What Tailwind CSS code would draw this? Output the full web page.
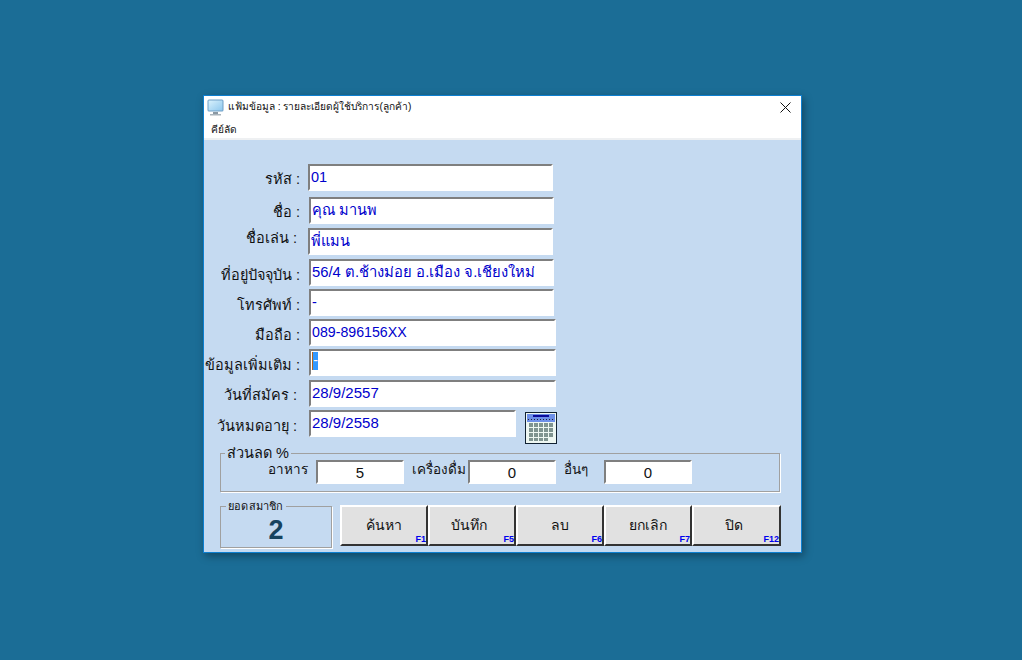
<!DOCTYPE html>
<html lang="th">
  <head>
    <meta charset="UTF-8" />
    <title>แฟ้มข้อมูล</title>
    <script src="https://cdn.jsdelivr.net/npm/@tailwindcss/browser@4"></script>
  </head>
  <body class="h-[660px] overflow-hidden bg-[#1b6d96] font-['Liberation_Sans','Noto_Sans',sans-serif] text-[#111]">
    <div class="pl-[203px] pt-[95px]">
      <div class="h-[458px] w-[599px] border border-[#0d7fd0] bg-[#c5daf1] shadow-[2px_3px_8px_rgba(0,0,0,0.35)]">
        <!-- title bar -->
        <div class="flex h-[22px] items-center bg-white pl-[3px]">
          <svg width="17" height="17" viewBox="0 0 17 17">
            <defs>
              <linearGradient id="screen" x1="0" y1="0" x2="1" y2="1">
                <stop offset="0" stop-color="#d8f1fc" />
                <stop offset="1" stop-color="#8fc8ee" />
              </linearGradient>
            </defs>
            <rect x="0.5" y="0.5" width="16" height="12" rx="1.5" fill="#6f9fc6" />
            <rect x="1.5" y="1.5" width="14" height="10" fill="url(#screen)" />
            <rect x="6" y="13" width="5" height="2" fill="#8a98a3" />
            <rect x="3" y="15" width="11" height="1.5" fill="#a9b4bc" />
          </svg>
          <span class="ml-1 text-[10.2px] leading-none">แฟ้มข้อมูล : รายละเอียดผู้ใช้บริการ(ลูกค้า)</span>
          <svg class="ml-auto mr-[10px]" width="11" height="11" viewBox="0 0 11 11">
            <path d="M0.5 0.5L10.5 10.5M10.5 0.5L0.5 10.5" stroke="#111" fill="none" />
          </svg>
        </div>
        <!-- menu -->
        <div class="h-[22px] border-b-2 border-[#eef0f2] bg-white pl-[7px] pt-1 text-[10.2px] leading-[16px]">คีย์ลัด</div>

        <!-- form rows -->
        <div class="pt-[24px] text-[14.5px]">
          <div class="flex h-[27px] items-center">
            <span class="mt-[5px] w-[96px] text-right">รหัส :</span>
            <div class="ml-[8px] h-[27px] w-[245px] border-2 border-[#7f7f7f] border-r-white border-b-white bg-white pl-[1px] text-[14.5px] leading-[22px] text-[#0000cc]">01</div>
          </div>
          <div class="mt-[6px] flex h-[27px] items-center">
            <span class="mt-[5px] w-[96px] text-right">ชื่อ :</span>
            <div class="ml-[9px] h-[27px] w-[245px] border-2 border-[#7f7f7f] border-r-white border-b-white bg-white pl-[1px] text-[14.5px] leading-[22px] text-[#0000cc]">คุณ มานพ</div>
          </div>
          <div class="mt-[4px] flex h-[27px] items-center">
            <span class="mb-[5px] w-[93px] text-right">ชื่อเล่น :</span>
            <div class="ml-[11px] h-[27px] w-[245px] border-2 border-[#7f7f7f] border-r-white border-b-white bg-white pl-[1px] text-[14.5px] leading-[22px] text-[#0000cc]">พี่แมน</div>
          </div>
          <div class="mt-[4px] flex h-[27px] items-center">
            <span class="mt-[7px] w-[96px] text-right whitespace-nowrap">ที่อยู่ปัจจุบัน :</span>
            <div class="ml-[9px] h-[27px] w-[245px] border-2 border-[#7f7f7f] border-r-white border-b-white bg-white pl-[1px] text-[14.8px] leading-[22px] whitespace-nowrap text-[#0000cc]">56/4 ต.ช้างม่อย อ.เมือง จ.เชียงใหม่</div>
          </div>
          <div class="mt-[3px] flex h-[27px] items-center">
            <span class="mt-[6px] w-[96px] text-right">โทรศัพท์ :</span>
            <div class="ml-[9px] h-[27px] w-[245px] border-2 border-[#7f7f7f] border-r-white border-b-white bg-white pl-[1px] text-[14.5px] leading-[22px] text-[#0000cc]">-</div>
          </div>
          <div class="mt-[3px] flex h-[27px] items-center">
            <span class="mt-[6px] w-[96px] text-right">มือถือ :</span>
            <div class="ml-[9px] h-[27px] w-[247px] border-2 border-[#7f7f7f] border-r-white border-b-white bg-white pl-[1px] text-[14.2px] leading-[22px] text-[#0000cc]">089-896156XX</div>
          </div>
          <div class="mt-[3px] flex h-[27px] items-center">
            <span class="mt-[6px] flex w-[96px] justify-end whitespace-nowrap">ข้อมูลเพิ่มเติม :</span>
            <div class="ml-[9px] h-[27px] w-[247px] border-2 border-[#7f7f7f] border-r-white border-b-white bg-white pl-[1px] pt-px">
              <div class="h-[18px] w-[6px] border-l border-[#b5651d] bg-[#3399ff] text-center text-[14px] leading-[16px] text-white">-</div>
            </div>
          </div>
          <div class="mt-[4px] flex h-[27px] items-center">
            <span class="mt-[5px] w-[93px] text-right">วันที่สมัคร :</span>
            <div class="ml-[12px] h-[27px] w-[247px] border-2 border-[#7f7f7f] border-r-white border-b-white bg-white pl-[1px] text-[15px] leading-[22px] text-[#0000cc]">28/9/2557</div>
          </div>
          <div class="mt-[3px] flex h-[27px] items-start">
            <span class="mt-[6px] w-[93px] text-right whitespace-nowrap">วันหมดอายุ :</span>
            <div class="ml-[12px] h-[27px] w-[207px] border-2 border-[#7f7f7f] border-r-white border-b-white bg-white pl-[1px] text-[15px] leading-[22px] text-[#0000cc]">28/9/2558</div>
            <svg class="ml-[9px] mt-[2px] shrink-0" width="32" height="32" viewBox="0 0 32 32">
              <rect x="0.5" y="0.5" width="31" height="31" fill="#eef7f2" stroke="#123" />
              <rect x="2" y="2" width="28" height="8" fill="#6d8fe8" />
              <rect x="8" y="3" width="16" height="2" fill="#0a0a9a" />
              <path d="M3 7.5H29" stroke="#223" stroke-dasharray="1 2" />
              <path d="M4 11h4v4H4zM9 11h4v4H9zM14 11h4v4h-4zM19 11h4v4h-4zM24 11h4v4h-4zM4 16h4v4H4zM9 16h4v4H9zM14 16h4v4h-4zM19 16h4v4h-4zM24 16h4v4h-4zM4 21h4v4H4zM9 21h4v4H9zM14 21h4v4h-4zM19 21h4v4h-4zM24 21h4v4h-4zM4 26h4v3H4zM9 26h4v3H9zM14 26h4v3h-4zM19 26h4v3h-4z" fill="#7f9490" />
            </svg>
          </div>
        </div>

        <!-- discount group -->
        <fieldset class="ml-[16px] mt-[8px] h-[47px] w-[560px] border border-[#a0a0a0] shadow-[1px_1px_0_#fff]">
          <legend class="ml-[4px] h-[16px] px-[2px] text-[14.5px] leading-[16px]">ส่วนลด %</legend>
          <div class="-mt-px flex h-[24px] items-center text-[13.5px]">
            <span class="ml-[47px] mb-[4px] w-[40px] whitespace-nowrap">อาหาร</span>
            <div class="ml-[8px] h-[24px] w-[88px] border-2 border-[#7f7f7f] border-r-white border-b-white bg-white text-center text-[15px] leading-[22px]">5</div>
            <span class="ml-[8px] mb-[3px] w-[56px] whitespace-nowrap">เครื่องดื่ม</span>
            <div class="h-[24px] w-[88px] border-2 border-[#7f7f7f] border-r-white border-b-white bg-white text-center text-[15px] leading-[22px]">0</div>
            <span class="ml-[8px] mb-[4px] w-[40px]">อื่นๆ</span>
            <div class="h-[24px] w-[88px] border-2 border-[#7f7f7f] border-r-white border-b-white bg-white text-center text-[15px] leading-[22px]">0</div>
          </div>
        </fieldset>

        <!-- bottom row -->
        <div class="ml-[16px] mt-[6px] flex items-start">
          <fieldset class="mt-[1px] h-[49px] w-[112px] border border-[#a0a0a0] shadow-[1px_1px_0_#fff]">
            <legend class="ml-[5px] h-[14px] px-[2px] text-[11px] leading-[14px] tracking-[0.2px]">ยอดสมาชิก</legend>
            <div class="text-center text-[27px] leading-[34px] font-bold text-[#17435f]">2</div>
          </fieldset>
          <div class="ml-[8px] mt-[7px] flex">
            <button class="relative h-[41px] w-[88px] border-2 border-white border-r-[#333] border-b-[#333] bg-[#e1e1e1] text-[14px]">ค้นหา<span class="absolute right-0 bottom-0 text-[9px] leading-[10px] font-bold text-[#0000ee]">F1</span></button>
            <button class="relative h-[41px] w-[88px] border-2 border-white border-r-[#333] border-b-[#333] bg-[#e1e1e1] pr-[6px] text-[14px]">บันทึก<span class="absolute right-0 bottom-0 text-[9px] leading-[10px] font-bold text-[#0000ee]">F5</span></button>
            <button class="relative h-[41px] w-[88px] border-2 border-white border-r-[#333] border-b-[#333] bg-[#e1e1e1] text-[14px]">ลบ<span class="absolute right-0 bottom-0 text-[9px] leading-[10px] font-bold text-[#0000ee]">F6</span></button>
            <button class="relative h-[41px] w-[88px] border-2 border-white border-r-[#333] border-b-[#333] bg-[#e1e1e1] text-[14px]">ยกเลิก<span class="absolute right-0 bottom-0 text-[9px] leading-[10px] font-bold text-[#0000ee]">F7</span></button>
            <button class="relative h-[41px] w-[89px] border-2 border-white border-r-[#333] border-b-[#333] bg-[#e1e1e1] pr-[6px] text-[14px]">ปิด<span class="absolute right-0 bottom-0 text-[9px] leading-[10px] font-bold text-[#0000ee]">F12</span></button>
          </div>
        </div>
      </div>
    </div>
  </body>
</html>
